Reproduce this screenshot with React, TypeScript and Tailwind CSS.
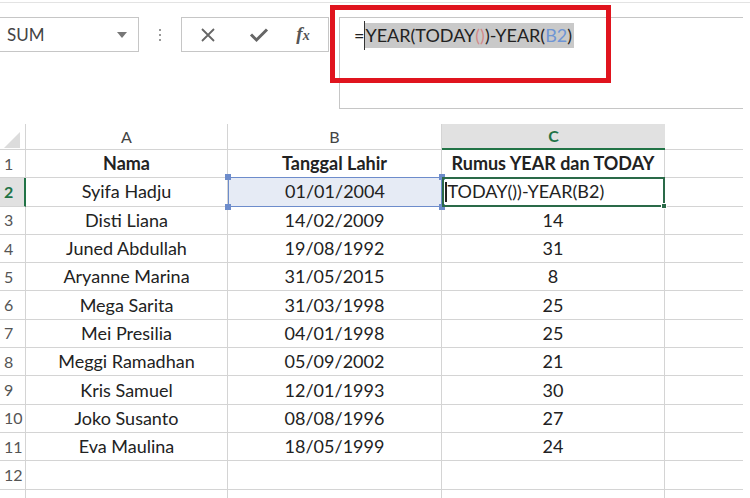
import React from "react";

const rows: [string, string, string][] = [
  ["Syifa Hadju", "01/01/2004", ""],
  ["Disti Liana", "14/02/2009", "14"],
  ["Juned Abdullah", "19/08/1992", "31"],
  ["Aryanne Marina", "31/05/2015", "8"],
  ["Mega Sarita", "31/03/1998", "25"],
  ["Mei Presilia", "04/01/1998", "25"],
  ["Meggi Ramadhan", "05/09/2002", "21"],
  ["Kris Samuel", "12/01/1993", "30"],
  ["Joko Susanto", "08/08/1996", "27"],
  ["Eva Maulina", "18/05/1999", "24"],
  ["", "", ""],
  ["", "", ""],
];

const Handle = ({ pos, color }: { pos: string; color: string }) => (
  <span className={`absolute w-[6px] h-[6px] ${pos} ${color}`} />
);

const App = () => {
  return (
    <div
      className="w-[750px] h-[498px] overflow-hidden bg-white text-[#222]"
      style={{ fontFamily: "Lato, 'Open Sans', sans-serif" }}
    >
      {/* Formula bar area */}
      <div className="relative h-[122px] border-t border-[#e3e3e3] mt-[2px]">
        <div className="flex items-start pt-[14px]">
          {/* Name box */}
          <div className="w-[139px] h-[35px] border border-l-0 border-[#c6c6c6] flex items-center justify-between pl-[7px] pr-[11px]">
            <span className="text-[17px] text-[#444]">SUM</span>
            <svg width="10" height="6" viewBox="0 0 10 6">
              <path d="M0 0h10L5 6z" fill="#777" />
            </svg>
          </div>
          {/* Dots */}
          <div className="w-[42px] h-[35px] flex flex-col items-center justify-center gap-[3px]">
            <span className="w-[2px] h-[2px] bg-[#999]" />
            <span className="w-[2px] h-[2px] bg-[#999]" />
            <span className="w-[2px] h-[2px] bg-[#999]" />
          </div>
          {/* Buttons */}
          <div className="w-[148px] h-[35px] border border-[#c6c6c6] flex items-center">
            <div className="w-[52px] flex justify-center">
              <svg width="16" height="16" viewBox="0 0 16 16">
                <path d="M2 2l12 12M14 2L2 14" stroke="#666" strokeWidth="1.8" />
              </svg>
            </div>
            <div className="w-[50px] flex justify-center">
              <svg width="20" height="16" viewBox="0 0 20 16">
                <path d="M2 7.5l5.5 5.5L18 2.5" stroke="#666" strokeWidth="3" fill="none" />
              </svg>
            </div>
            <div className="flex-1 flex justify-center pr-[6px]">
              <span
                className="italic font-bold text-[19px] text-[#555]"
                style={{ fontFamily: "'Liberation Serif', serif" }}
              >
                f<span className="text-[14px]">x</span>
              </span>
            </div>
          </div>
          {/* Formula input */}
          <div className="ml-[10px] w-[404px] h-[92px] border border-r-0 border-[#c6c6c6] pl-[14px] pt-[4px]">
            <div className="flex items-center h-[27px] text-[18px]">
              <span>=</span>
              <span className="relative bg-[#c9c9c9] pl-[1px] pr-[2px] h-[25px] flex items-center">
                <span className="absolute left-0 top-[-2px] w-[1px] h-[29px] bg-[#333]" />
                YEAR(TODAY<span className="text-[#d48a8a]">()</span>)-YEAR(<span className="text-[#6f95d4]">B2</span>)
              </span>
            </div>
          </div>
        </div>
        {/* Red annotation box */}
        <div className="absolute left-[330px] top-[2px] w-[281px] h-[78px] border-[5px] border-[#e0141e]" />
      </div>

      {/* Grid */}
      <div className="text-[18px]">
        {/* Column headers */}
        <div className="flex h-[26px] text-[16px] text-[#444]">
          <div className="w-[26px] border-r border-b border-[#d4d4d4] relative">
            <svg className="absolute left-[4px] top-[8px]" width="16" height="16" viewBox="0 0 16 16">
              <path d="M16 0V16H0z" fill="#dcdcdc" />
            </svg>
          </div>
          <div className="w-[202px] border-r border-b border-[#d4d4d4] flex items-center justify-center">A</div>
          <div className="w-[214px] border-r border-b border-[#d4d4d4] flex items-center justify-center">B</div>
          <div className="w-[223px] bg-[#e1e1e1] border-b-2 border-[#217346] flex items-center justify-center text-[#217346] font-bold">C</div>
          <div className="w-[78px] border-b border-[#d4d4d4]" />
        </div>

        {/* Row 1 */}
        <div className="flex h-[28.3px]">
          <div className="w-[26px] border-r border-b border-[#d4d4d4] flex items-center pl-[4px] text-[16px] text-[#555]">1</div>
          <div className="w-[202px] border-r border-b border-[#d4d4d4] flex items-center justify-center font-bold">Nama</div>
          <div className="w-[214px] border-r border-b border-[#d4d4d4] flex items-center justify-center font-bold">Tanggal Lahir</div>
          <div className="w-[223px] border-r border-b border-[#d4d4d4] flex items-center justify-center font-bold">Rumus YEAR dan TODAY</div>
          <div className="w-[78px] border-b border-[#d4d4d4]" />
        </div>

        {rows.map((r, i) => {
          const n = i + 2;
          const active = n === 2;
          return (
            <div key={n} className="flex h-[28.3px]">
              <div
                className={
                  active
                    ? "w-[26px] bg-[#e1e1e1] border-r-2 border-r-[#217346] border-b border-b-[#d4d4d4] flex items-center pl-[4px] text-[16px] text-[#217346] font-bold"
                    : "w-[26px] border-r border-b border-[#d4d4d4] flex items-center pl-[4px] text-[16px] text-[#555]"
                }
              >
                {n}
              </div>
              <div className="w-[202px] border-r border-b border-[#d4d4d4] flex items-center justify-center">{r[0]}</div>
              {active ? (
                <div className="relative w-[214px] bg-[#e6ebf5] border-[1.5px] border-[#6d8ccb] flex items-center justify-center -mt-[1px]">
                  {r[1]}
                  <Handle pos="-left-[4px] -top-[4px]" color="bg-[#6d8ccb]" />
                  <Handle pos="-right-[4px] -top-[4px]" color="bg-[#6d8ccb]" />
                  <Handle pos="-left-[4px] -bottom-[4px]" color="bg-[#6d8ccb]" />
                  <Handle pos="-right-[4px] -bottom-[4px]" color="bg-[#6d8ccb]" />
                </div>
              ) : (
                <div className="w-[214px] border-r border-b border-[#d4d4d4] flex items-center justify-center">{r[1]}</div>
              )}
              {active ? (
                <div className="relative w-[223px] border-2 border-[#2a6a48] flex items-center pl-[1px] -mt-[1px]">
                  <span className="w-[1.5px] h-[20px] bg-[#222] mr-[1px]" />
                  TODAY())-YEAR(B2)
                  <span className="absolute -right-[4px] -bottom-[4px] w-[6px] h-[6px] bg-[#2a6a48] border border-white" />
                </div>
              ) : (
                <div className="w-[223px] border-r border-b border-[#d4d4d4] flex items-center justify-center">{r[2]}</div>
              )}
              <div className="w-[78px] border-b border-[#d4d4d4]" />
            </div>
          );
        })}
      </div>
    </div>
  );
};

export default App;
